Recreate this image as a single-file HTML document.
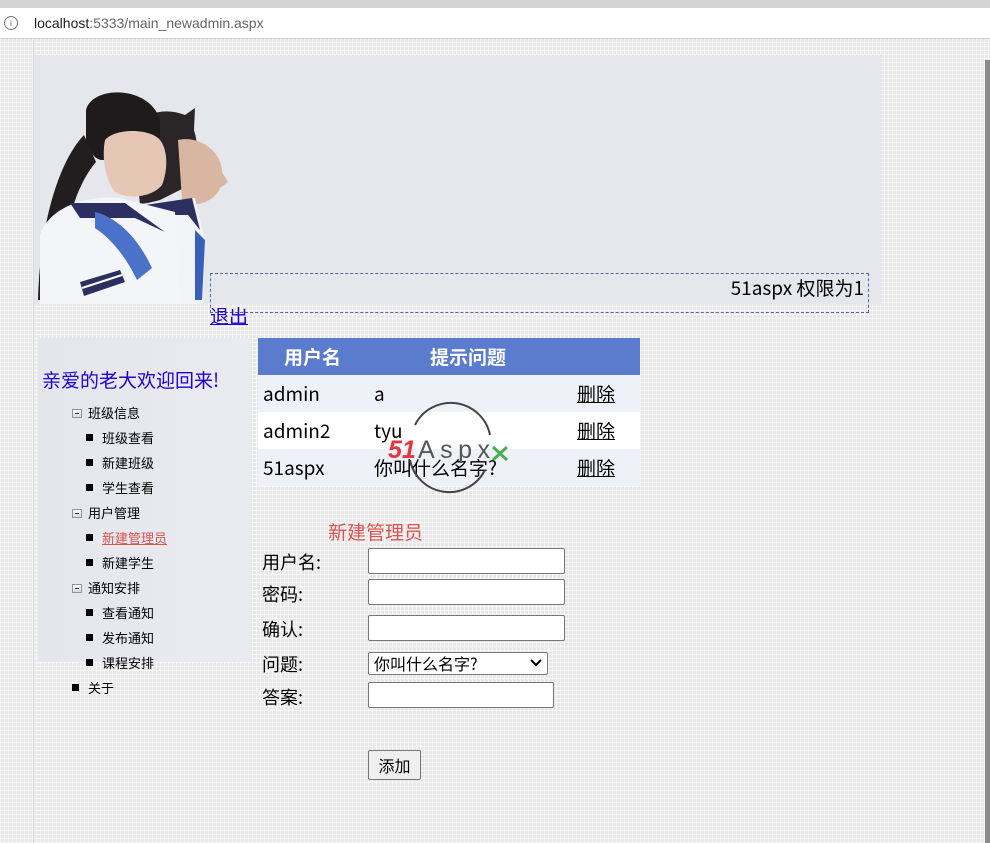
<!DOCTYPE html>
<html><head><meta charset="utf-8"><style>
*{margin:0;padding:0;box-sizing:border-box}
body{width:990px;height:843px;overflow:hidden;position:relative;font-family:"Liberation Sans","Noto Sans CJK SC",sans-serif;
background-color:#e8e8e8;
background-image:repeating-linear-gradient(0deg,#f6f6f6 0 1px,transparent 1px 4px),repeating-linear-gradient(90deg,#f6f6f6 0 1px,transparent 1px 4px);}
.a{position:absolute}
.cjk{font-family:"Noto Sans CJK SC","WenQuanYi Zen Hei",sans-serif}
.tree{font-size:13px;color:#000;white-space:nowrap}
.sq{display:inline-block;width:7px;height:7px;background:#000;margin-right:9px;vertical-align:2px}
.mn{display:inline-block;width:10px;height:9px;border:1px solid #8a97a8;background:linear-gradient(#fff,#d6dbe3);margin-right:6px;vertical-align:0;position:relative}
.mn:after{content:"";position:absolute;left:2px;top:3px;width:4px;height:1px;background:#333}
.row{position:absolute;left:258px;width:382px;height:37px;font-size:19px;line-height:37px}
.row span{position:absolute}
.lbl{position:absolute;left:262px;font-size:18px;color:#000}
.inp{position:absolute;left:368px;background:#fff;border:1px solid #767676;border-radius:2px}
</style></head><body>
<div class="a" style="left:0;top:0;width:990px;height:8px;background:#d4d4d4"></div>
<div class="a" style="left:0;top:8px;width:990px;height:31px;background:#fff;border-bottom:1px solid #d0d0d0"></div>
<div class="a" style="left:4px;top:16px;width:14px;height:14px;border:1px solid #777;border-radius:50%;font-size:9px;line-height:12px;text-align:center;color:#777">i</div>
<div class="a" style="left:34px;top:15px;font-size:14px;color:#222">localhost<span style="color:#666">:5333/main_newadmin.aspx</span></div>
<div class="a" style="left:985px;top:60px;width:5px;height:783px;background:#8a8a8a"></div>
<div class="a" style="left:33px;top:40px;width:1px;height:803px;background:#d8d8d8"></div>

<div class="a" style="left:34px;top:55px;width:847px;height:249px;background:#e5e7ec"></div>
<svg class="a" style="left:34px;top:75px" width="200" height="229" viewBox="34 75 200 229">
 <path d="M135 150 C130 115 160 105 185 115 L195 108 L194 130 C200 150 198 170 190 185 L160 200 L140 205 Z" fill="#2a2628"/>
 <path d="M178 140 C200 135 222 152 222 172 L228 182 L220 188 C216 198 205 204 192 205 L182 200 Z" fill="#d8b6a2"/>
 <path d="M130 205 L195 198 L205 240 L203 304 L130 304 Z" fill="#f2f3f6"/>
 <path d="M145 205 L192 198 L200 230 L188 215 L160 215 Z" fill="#2b3060"/>
 <path d="M195 230 L205 240 L202 300 L195 300 Z" fill="#3a5fb8"/>
 <path d="M86 110 C92 85 150 85 160 120 L160 140 L150 150 L120 150 C110 160 95 170 86 140 Z" fill="#1f1b1d"/>
 <path d="M84 135 C60 160 40 220 38 300 L58 300 C62 240 72 190 96 162 Z" fill="#221e20"/>
 <path d="M105 140 C115 128 150 128 160 140 C168 150 168 170 162 185 C152 197 130 200 115 192 C104 178 102 155 105 140 Z" fill="#e6c7b5"/>
 <path d="M40 235 C50 205 90 195 120 198 L175 212 L180 304 L40 304 Z" fill="#f4f5f8"/>
 <path d="M70 203 L125 203 L165 232 L135 218 L80 218 Z" fill="#2b3060"/>
 <path d="M95 212 C120 218 140 242 152 268 L137 280 C125 255 110 238 95 228 Z" fill="#4a72c8"/>
 <path d="M80 282 L120 270 L125 282 L84 296 Z" fill="#2b3060"/>
 <path d="M82 288 L122 275" stroke="#fff" stroke-width="2"/>
</svg>
<div class="a" style="left:210px;top:273px;width:659px;height:40px;border:1px dashed #52679a"></div>
<div class="a cjk" style="left:0;top:274px;width:864px;text-align:right;font-size:19px;color:#000">51aspx 权限为1</div>
<div class="a cjk" style="left:210px;top:302px;font-size:19px;color:#2200cc;text-decoration:underline">退出</div>

<div class="a" style="left:38px;top:338px;width:212px;height:324px;background:linear-gradient(90deg,#e4e6ec,#e9ebf0)"></div>
<div class="a cjk" style="left:42px;top:366px;font-size:19px;color:#2200cc">亲爱的老大欢迎回来!</div>
<div class="a tree cjk" style="left:72px;top:403px"><span class="mn"></span>班级信息</div>
<div class="a tree cjk" style="left:86px;top:428px"><span class="sq"></span>班级查看</div>
<div class="a tree cjk" style="left:86px;top:453px"><span class="sq"></span>新建班级</div>
<div class="a tree cjk" style="left:86px;top:478px"><span class="sq"></span>学生查看</div>
<div class="a tree cjk" style="left:72px;top:503px"><span class="mn"></span>用户管理</div>
<div class="a tree cjk" style="left:86px;top:528px"><span class="sq"></span><span style="color:#d9534f;text-decoration:underline">新建管理员</span></div>
<div class="a tree cjk" style="left:86px;top:553px"><span class="sq"></span>新建学生</div>
<div class="a tree cjk" style="left:72px;top:578px"><span class="mn"></span>通知安排</div>
<div class="a tree cjk" style="left:86px;top:603px"><span class="sq"></span>查看通知</div>
<div class="a tree cjk" style="left:86px;top:628px"><span class="sq"></span>发布通知</div>
<div class="a tree cjk" style="left:86px;top:653px"><span class="sq"></span>课程安排</div>
<div class="a tree cjk" style="left:72px;top:678px"><span class="sq"></span>关于</div>

<div class="a cjk" style="left:258px;top:338px;width:382px;height:37px;background:#5b7bcd;color:#fff;font-size:19px;font-weight:bold;line-height:37px">
 <span class="a" style="left:26px">用户名</span><span class="a" style="left:172px">提示问题</span></div>
<div class="row cjk" style="top:375px;background:#eef1f8"><span style="left:5px">admin</span><span style="left:116px">a</span><span style="left:319px;text-decoration:underline">删除</span></div>
<div class="row cjk" style="top:412px;background:#fff"><span style="left:5px">admin2</span><span style="left:116px">tyu</span><span style="left:319px;text-decoration:underline">删除</span></div>
<div class="row cjk" style="top:449px;background:#eef1f8"><span style="left:5px">51aspx</span><span style="left:116px">你叫什么名字?</span><span style="left:319px;text-decoration:underline">删除</span></div>
<svg class="a" style="left:385px;top:400px" width="130" height="95">
 <path d="M30 25 A40 40 0 0 1 105 35" fill="none" stroke="#444" stroke-width="2"/>
 <path d="M25 60 A40 40 0 0 0 100 70" fill="none" stroke="#444" stroke-width="2"/>
 <text x="3" y="58" font-family="Liberation Sans" font-style="italic" font-weight="bold" font-size="25" fill="#e0383e">51</text>
 <text x="33" y="58" font-family="Liberation Sans" font-size="25" fill="#555" textLength="72">Aspx</text>
 <path d="M108 47 L122 60 M122 47 L108 60" stroke="#4caf50" stroke-width="3"/>
</svg>

<div class="a cjk" style="left:328px;top:518px;font-size:19px;color:#d9534f">新建管理员</div>
<div class="lbl cjk" style="top:549px">用户名:</div>
<div class="lbl cjk" style="top:581px">密码:</div>
<div class="lbl cjk" style="top:616px">确认:</div>
<div class="lbl cjk" style="top:651px">问题:</div>
<div class="lbl cjk" style="top:684px">答案:</div>
<div class="inp" style="top:548px;width:197px;height:26px"></div>
<div class="inp" style="top:579px;width:197px;height:26px"></div>
<div class="inp" style="top:615px;width:197px;height:26px"></div>
<div class="inp cjk" style="top:652px;width:180px;height:23px;font-size:16px;line-height:21px;padding-left:5px">你叫什么名字?</div>
<svg class="a" style="left:530px;top:658px" width="12" height="10"><path d="M1 2 L6 7 L11 2" fill="none" stroke="#000" stroke-width="2"/></svg>
<div class="inp" style="top:682px;width:186px;height:26px"></div>
<div class="a cjk" style="left:368px;top:750px;width:53px;height:30px;background:#efefef;border:1px solid #767676;border-radius:2px;font-size:16px;text-align:center;line-height:28px">添加</div>
</body></html>
